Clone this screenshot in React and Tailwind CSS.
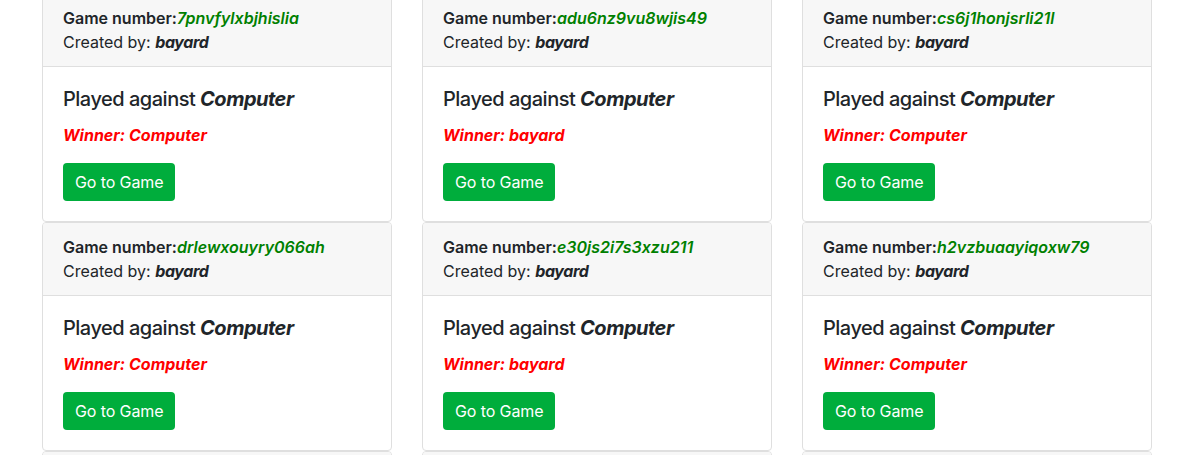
import React from 'react';

const games = [
    { id: '7pnvfylxbjhislia', winner: 'Computer' },
    { id: 'adu6nz9vu8wjis49', winner: 'bayard' },
    { id: 'cs6j1honjsrli21l', winner: 'Computer' },
    { id: 'drlewxouyry066ah', winner: 'Computer' },
    { id: 'e30js2i7s3xzu211', winner: 'bayard' },
    { id: 'h2vzbuaayiqoxw79', winner: 'Computer' },
    { id: 'k8mfq2pa0zty5c1e', winner: 'bayard' },
    { id: 'm3xw9rhd6gblu0ns', winner: 'Computer' },
    { id: 'q7tj4ecv1ozk8ayd', winner: 'Computer' },
];

const GameCard = ({ game }) => (
    <div className="flex flex-col border border-[#dfdfdf] rounded-[4px] bg-white overflow-hidden">
        <div className="bg-[#f7f7f7] border-b border-[#dfdfdf] px-5 py-3">
            <div className="text-[16px] leading-6 font-semibold">
                Game number:<span className="italic text-[#008000]">{game.id}</span>
            </div>
            <div className="text-[16px] leading-6">
                Created by: <b className="italic font-bold tracking-[-0.4px]">bayard</b>
            </div>
        </div>
        <div className="p-5">
            <h5 className="text-[20px] leading-6 mb-3 font-medium tracking-[-0.5px]">
                Played against <b className="italic font-bold">Computer</b>
            </h5>
            <p className="text-[16px] leading-6 mb-4 italic font-bold text-[#ff0000]">Winner: {game.winner}</p>
            <button className="h-[38px] px-3 rounded-[4px] bg-[#00ad3c] text-white text-[16px] leading-6 tracking-[-0.1px]">
                Go to Game
            </button>
        </div>
    </div>
);

const App = () => {
    return (
        <div className="h-[455px] overflow-hidden bg-white text-[#212529] font-['Inter','Liberation_Sans',sans-serif]">
            <div className="-mt-[7px] pl-[42px] grid grid-cols-[350px_350px_350px] gap-x-[30px]">
                {games.map((g) => (
                    <GameCard key={g.id} game={g} />
                ))}
            </div>
        </div>
    );
};

export default App;
